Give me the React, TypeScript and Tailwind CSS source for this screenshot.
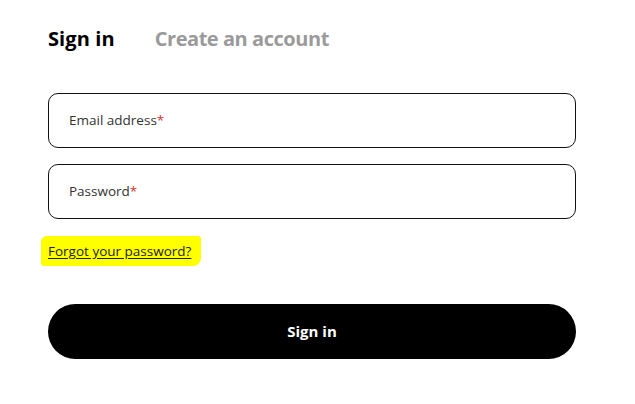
import { useState } from 'react';

export default function App() {
  const [tab, setTab] = useState<'signin' | 'create'>('signin');
  const [email, setEmail] = useState('');
  const [password, setPassword] = useState('');

  return (
    <div className="w-[635px] h-[404px] bg-white font-['Open_Sans','Noto_Sans',sans-serif] text-black">
      <div className="w-[528px] ml-[48px] pt-[25px]">
        <div className="flex items-center gap-[40px] h-[28px]">
          <button
            onClick={() => setTab('signin')}
            className={`text-[20px] font-bold leading-[28px] tracking-[0.1px] ${tab === 'signin' ? 'text-black' : 'text-[#9a9a9a]'}`}
          >
            Sign in
          </button>
          <button
            onClick={() => setTab('create')}
            className={`text-[20px] font-bold leading-[28px] tracking-[-0.45px] ${tab === 'create' ? 'text-black' : 'text-[#9a9a9a]'}`}
          >
            Create an account
          </button>
        </div>

        <div className="mt-[40px] flex flex-col gap-[16px]">
          <label className="h-[55px] border border-[#111] rounded-[10px] flex items-center px-[20px]">
            {email === '' && (
              <span className="absolute text-[13.5px] text-[#333] pointer-events-none">
                Email address<span className="text-[#d0312d]">*</span>
              </span>
            )}
            <input
              value={email}
              onChange={(e) => setEmail(e.target.value)}
              className="w-full bg-transparent outline-none text-[14px]"
            />
          </label>
          <label className="h-[55px] border border-[#111] rounded-[10px] flex items-center px-[20px]">
            {password === '' && (
              <span className="absolute text-[13.5px] text-[#333] pointer-events-none">
                Password<span className="text-[#d0312d]">*</span>
              </span>
            )}
            <input
              type="password"
              value={password}
              onChange={(e) => setPassword(e.target.value)}
              className="w-full bg-transparent outline-none text-[14px]"
            />
          </label>
        </div>

        <div className="mt-[17px] -ml-[7px]">
          <span className="inline-block bg-[#ffff00] pl-[7px] pr-[10px] py-[7px] rounded-tl-[6px] rounded-tr-[3px] rounded-bl-[3px] rounded-br-[8px]">
            <a href="#" className="block text-[13.5px] leading-[16px] text-[#222] underline underline-offset-2">
              Forgot your password?
            </a>
          </span>
        </div>

        <button className="mt-[38px] w-full h-[55px] rounded-full bg-black text-white text-[15px] font-bold">
          Sign in
        </button>
      </div>
    </div>
  );
}
